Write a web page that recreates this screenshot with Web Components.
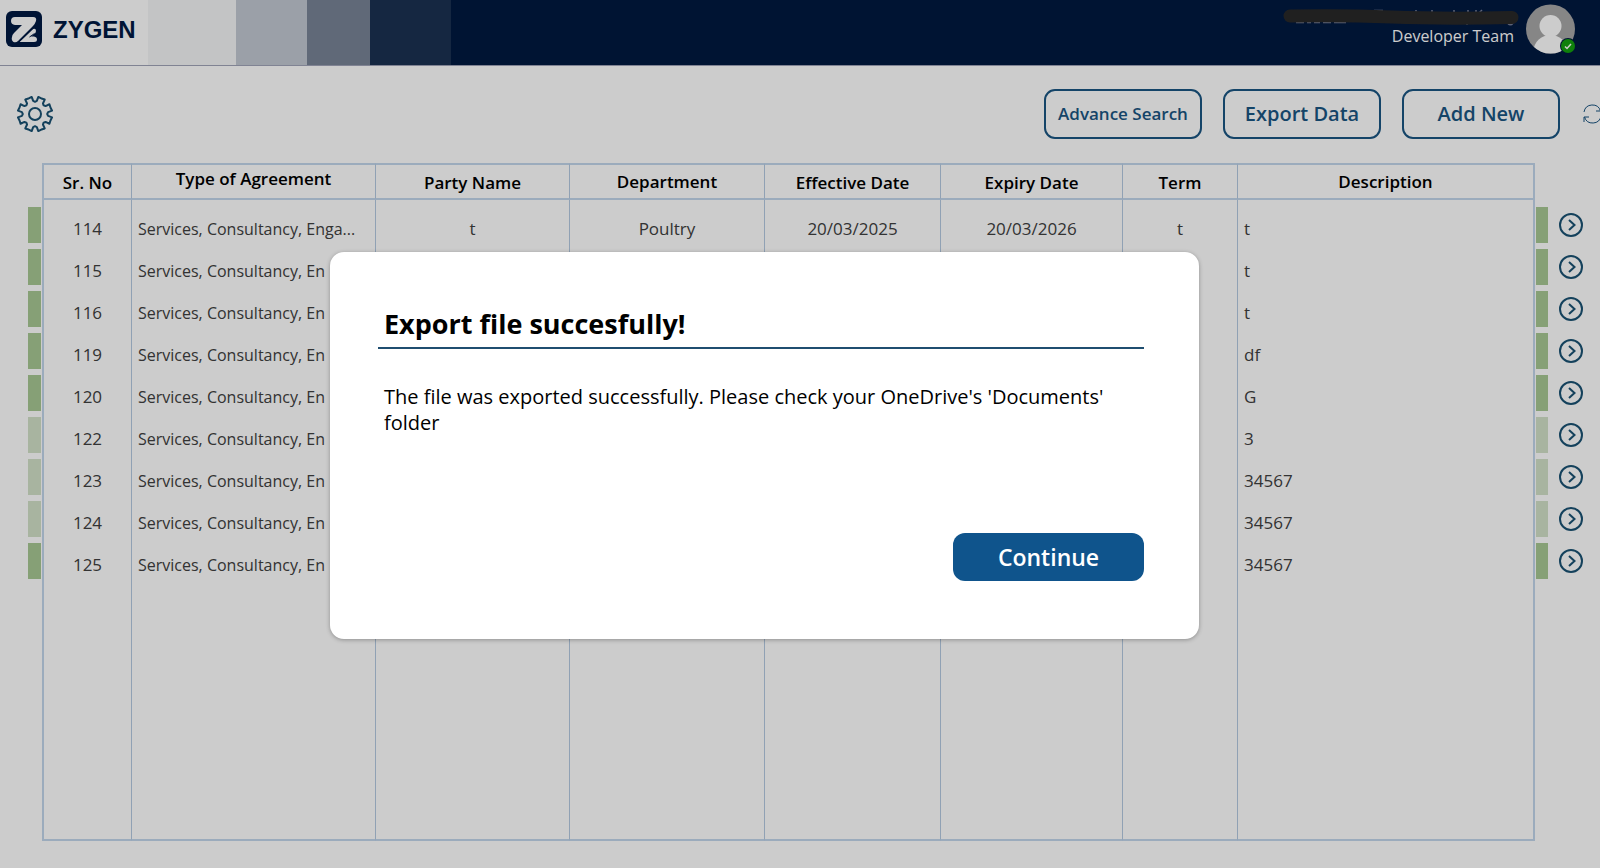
<!DOCTYPE html>
<html lang="en">
<head>
<meta charset="utf-8">
<title>Zygen - Agreements</title>
<style>
    html, body { height: 100%; }
    body {
        margin: 0;
        overflow: hidden;
        background: #fff;
        font-family: "Segoe UI", "Open Sans", "Noto Sans", sans-serif;
    }
</style>
</head>
<body>
<agreement-app></agreement-app>

<script>
function define(name, html, setup) {
    const template = document.createElement('template');
    template.innerHTML = html;

    customElements.define(name, class extends HTMLElement {
        constructor() {
            super();
            this.attachShadow({ mode: 'open' });
            this.shadowRoot.appendChild(template.content.cloneNode(true));
            if (setup) setup(this.shadowRoot, this);
        }
    });
}

define('zygen-logo', `
    <style>
        :host {
            display: flex;
            align-items: center;
            gap: 11px;
            box-sizing: border-box;
            width: 148px;
            padding: 0 0 8px 6px;
            background: #fff;
            color: #001a43;
            font: bold 24px "Liberation Sans", Arial, sans-serif;
        }
        svg { width: 36px; height: 36px; flex: none; }
        span { padding-top: 3px; }
    </style>
    <svg viewBox="0 0 36 36" aria-hidden="true">
        <rect width="36" height="36" rx="6" fill="#001a43"/>
        <path d="M9 6H27Q31 6 30 10Q29 13 27 15L12 30Q10 32 7.500 31Q5 29 6 26Q6 24 8 22L16 14H9Q5 13.500 5 10Q5 6 9 6Z" fill="#fff"/>
        <path d="M13.500 31L27 18Q30 17 30 20Q30 22 27.500 23.500L25 25.500H28Q31 26 31 28.500Q31 31 28 31Z" fill="#fff"/>
        <path d="M13 31L28 16.500M23.500 26L28.500 22.500" stroke="#001a43" stroke-width="1"/>
    </svg>
    <span>ZYGEN</span>
`);

define('user-badge', `
    <style>
        :host {
            display: flex;
            align-items: flex-start;
            gap: 6px;
            padding: 4px 24px 0 0;
            color: #fff;
            font-size: 16px;
            line-height: 20px;
        }
        .who { text-align: right; padding-top: 2px; }
        .who span { padding-right: 6px; }
        .hidden-name { display: block; width: 238px; height: 20px; }
        .avatar { width: 50px; height: 50px; }
    </style>
    <div class="who">
        <svg class="hidden-name" viewBox="0 0 238 20" aria-hidden="true">
            <path d="M14 16.500h8m3 0h4m3 0h6m3 0h8m3 0h12M92 4.500h9M134 4v3M150 4v3M172 4v3M186 4v3M194 4v3M200 4l-3 3M185 17v2M226 18q3 2 5-1" stroke="#aab" stroke-width="1.500" fill="none" opacity=".7"/>
            <path d="M8 10Q60 9 110 11T230 11.500" stroke="#292929" stroke-width="13" stroke-linecap="round" fill="none"/>
        </svg>
        <span>Developer Team</span>
    </div>
    <svg class="avatar" viewBox="0 0 50 50" role="img" aria-label="Available">
        <clipPath id="round"><circle cx="24.500" cy="25" r="24.500"/></clipPath>
        <g clip-path="url(#round)">
            <rect width="50" height="50" fill="#a8a8a8"/>
            <circle cx="24.500" cy="22" r="11" fill="#fff"/>
            <ellipse cx="24.500" cy="47" rx="17" ry="16" fill="#fff"/>
        </g>
        <circle cx="42" cy="42" r="8" fill="#001940"/>
        <circle cx="42" cy="42" r="7" fill="#13a10e"/>
        <path d="M39 42.500l2 2 4-4.500" stroke="#fff" stroke-width="1.500" fill="none"/>
    </svg>
`);

define('app-header', `
    <style>
        :host { display: flex; height: 65px; background: #001940; border-bottom: 1px solid #a0a4b8; }
        .fade { display: flex; }
        .fade i { display: block; }
        user-badge { margin-left: auto; }
    </style>
    <zygen-logo></zygen-logo>
    <div class="fade">
        <i style="width: 88px; background: #f4f5f7"></i>
        <i style="width: 71px; background: #c2c9d2"></i>
        <i style="width: 63px; background: #788496"></i>
        <i style="width: 81px; background: #1b3152"></i>
    </div>
    <user-badge></user-badge>
`);

define('outline-button', `
    <style>
        :host { display: block; width: 158px; flex: none; }
        button {
            width: 100%;
            height: 50px;
            padding: 0;
            border: 2px solid #1a5582;
            border-radius: 11px;
            background: none;
            color: #1a5582;
            font: 600 20px/24px "Segoe UI", "Open Sans", "Noto Sans", sans-serif;
        }
        :host([small]) button { font-size: 17px; }
    </style>
    <button type="button"><slot></slot></button>
`);

define('tool-bar', `
    <style>
        :host { display: flex; align-items: center; gap: 21px; padding: 23px 0 24px 16px; }
        .icon { padding: 0; border: 0; background: none; flex: none; display: block; }
        .icon svg { display: block; }
        .gear { margin-right: auto; }
        .refresh { box-sizing: border-box; width: 19px; padding-left: 2px; overflow: hidden; }
    </style>
    <button class="icon gear" type="button" aria-label="Settings">
        <svg width="38" height="38" viewBox="-19 -19 38 38" fill="none" stroke="#1a5273" stroke-width="2" stroke-linejoin="round">
            <path class="teeth"/>
            <circle r="6"/>
        </svg>
    </button>
    <outline-button small>Advance Search</outline-button>
    <outline-button>Export Data</outline-button>
    <outline-button>Add New</outline-button>
    <button class="icon refresh" type="button" aria-label="Refresh">
        <svg width="20" height="20" viewBox="0 0 20 20" fill="none" stroke="#1a5582">
            <path d="M1 8A8.500 8.500 0 0 1 17.500 7M18 2V7H13M18 12A8.500 8.500 0 0 1 1.500 13M1 18V13H6"/>
        </svg>
    </button>
`, root => {
    // eight teeth, each one a notch followed by a flat top
    let d = '';
    for (let i = 0; i < 8; i++) {
        [[-22, 16.8], [-11, 17.4], [-8, 13.2], [0, 12.2], [8, 13.2], [11, 17.4], [22, 16.8]].forEach(([angle, r]) => {
            const a = (angle + i * 45) * Math.PI / 180;
            d += (d ? 'L' : 'M') + (r * Math.sin(a)).toFixed(2) + ' ' + (-r * Math.cos(a)).toFixed(2);
        });
    }
    root.querySelector('.teeth').setAttribute('d', d + 'Z');
});

define('agreement-table', `
    <style>
        :host { display: flex; flex: 1; padding: 0 17px 27px 28px; }
        table {
            width: 100%;
            table-layout: fixed;
            border-collapse: separate;
            border-spacing: 0;
            color: #404040;
            font-size: 17px;
            line-height: 22px;
        }
        td, th { box-sizing: border-box; padding: 0; }
        th { height: 37px; padding-top: 2px; color: #000; font-weight: 600; }
        th.high { padding-bottom: 7px; }
        th.mid { padding-top: 0; }
        thead th { border-top: 2px solid #c2d6ec; border-bottom: 2px solid #c2d6ec; }
        .line { border-left: 1px solid #b4cae2; }
        .edge, td:first-child + .line { border-left: 2px solid #c2d6ec; }
        .gap td { height: 4px; }
        .row td { height: 42px; text-align: center; }
        .row td.line { padding-top: 7px; }
        .row td.left {
            padding-left: 6px;
            text-align: left;
            white-space: nowrap;
            overflow: hidden;
            text-overflow: ellipsis;
        }
        .row .type { font-size: 16px; }
        .bar i { display: block; height: 36px; width: 13px; background: #a8c894; }
        .bar.end i { width: 12px; margin-left: 1px; }
        .pale .bar i { background: #d2e1c8; }
        .rest .line { border-bottom: 2px solid #c2d6ec; }
        .go { padding: 0; border: 0; background: none; display: block; margin-left: auto; }
        .go svg { display: block; }
    </style>
    <table>
        <colgroup>
            <col style="width: 14px"><col style="width: 89px"><col style="width: 244px">
            <col style="width: 194px"><col style="width: 195px"><col style="width: 176px">
            <col style="width: 182px"><col style="width: 115px"><col>
            <col style="width: 16px"><col style="width: 34px">
        </colgroup>
        <thead>
            <tr>
                <td></td>
                <th class="line">Sr. No</th>
                <th class="line high">Type of Agreement</th>
                <th class="line">Party Name</th>
                <th class="line mid">Department</th>
                <th class="line">Effective Date</th>
                <th class="line">Expiry Date</th>
                <th class="line">Term</th>
                <th class="line mid">Description</th>
                <td class="edge"></td>
                <td></td>
            </tr>
        </thead>
        <tbody></tbody>
    </table>
`, root => {
    const descriptions = {
        114: 't', 115: 't', 116: 't', 119: 'df', 120: 'G',
        122: '3', 123: '34567', 124: '34567', 125: '34567'
    };
    const blank = cls => `<tr class="${cls}"><td></td>${'<td class="line"></td>'.repeat(8)}<td class="edge"></td><td></td></tr>`;
    const rows = Object.entries(descriptions).map(([no, text]) => {
        // only the first record is visible around the dialog
        const first = no === '114';
        return `
            <tr class="row ${['122', '123', '124'].includes(no) ? 'pale' : ''}">
                <td class="bar"><i></i></td>
                <td class="line">${no}</td>
                <td class="line left type">${first ? 'Services, Consultancy, Enga...' : 'Services, Consultancy, En'}</td>
                <td class="line">${first ? 't' : ''}</td>
                <td class="line">${first ? 'Poultry' : ''}</td>
                <td class="line">${first ? '20/03/2025' : ''}</td>
                <td class="line">${first ? '20/03/2026' : ''}</td>
                <td class="line">${first ? 't' : ''}</td>
                <td class="line left">${text}</td>
                <td class="bar end edge"><i></i></td>
                <td><button class="go" type="button" aria-label="Open ${no}">
                    <svg width="24" height="24" viewBox="0 0 24 24" fill="none" stroke="#1a5273" stroke-width="2">
                        <circle cx="12" cy="12" r="11"/><path d="M10 7l5.500 5-5.500 5"/>
                    </svg>
                </button></td>
            </tr>`;
    });
    root.querySelector('tbody').innerHTML = blank('gap') + rows.join('') + blank('rest');
});

define('message-dialog', `
    <style>
        :host {
            position: absolute;
            inset: 0;
            display: flex;
            align-items: center;
            justify-content: center;
            padding: 22px 71px 0 0;
            background: rgba(0, 0, 0, .2);
        }
        section {
            display: flex;
            flex-direction: column;
            box-sizing: border-box;
            width: 869px;
            min-height: 387px;
            padding: 48px 55px 58px 48px;
            border-radius: 14px;
            background: #fff;
            box-shadow: 0 1px 4px rgba(0, 0, 0, .3);
            color: #000;
        }
        h1 {
            margin: 0;
            padding: 6px 6px 5px;
            border-bottom: 2px solid #1f4e70;
            font-size: 27px;
            line-height: 36px;
            font-weight: 700;
        }
        p { margin: 35px 6px 0; font-size: 20px; line-height: 26px; }
        button {
            align-self: flex-end;
            width: 191px;
            height: 48px;
            margin-top: auto;
            border: 0;
            border-radius: 12px;
            background: #0f548c;
            color: #fff;
            font: 600 23px/28px "Segoe UI", "Open Sans", "Noto Sans", sans-serif;
        }
    </style>
    <section role="dialog" aria-labelledby="title">
        <h1 id="title"><slot name="title"></slot></h1>
        <p><slot></slot></p>
        <button type="button">Continue</button>
    </section>
`);

define('agreement-app', `
    <style>
        :host { display: flex; flex-direction: column; position: relative; height: 100%; }
    </style>
    <app-header></app-header>
    <tool-bar></tool-bar>
    <agreement-table></agreement-table>
    <message-dialog>
        <span slot="title">Export file succesfully!</span>
        The file was exported successfully. Please check your OneDrive's 'Documents' folder
    </message-dialog>
`);
</script>
</body>
</html>
